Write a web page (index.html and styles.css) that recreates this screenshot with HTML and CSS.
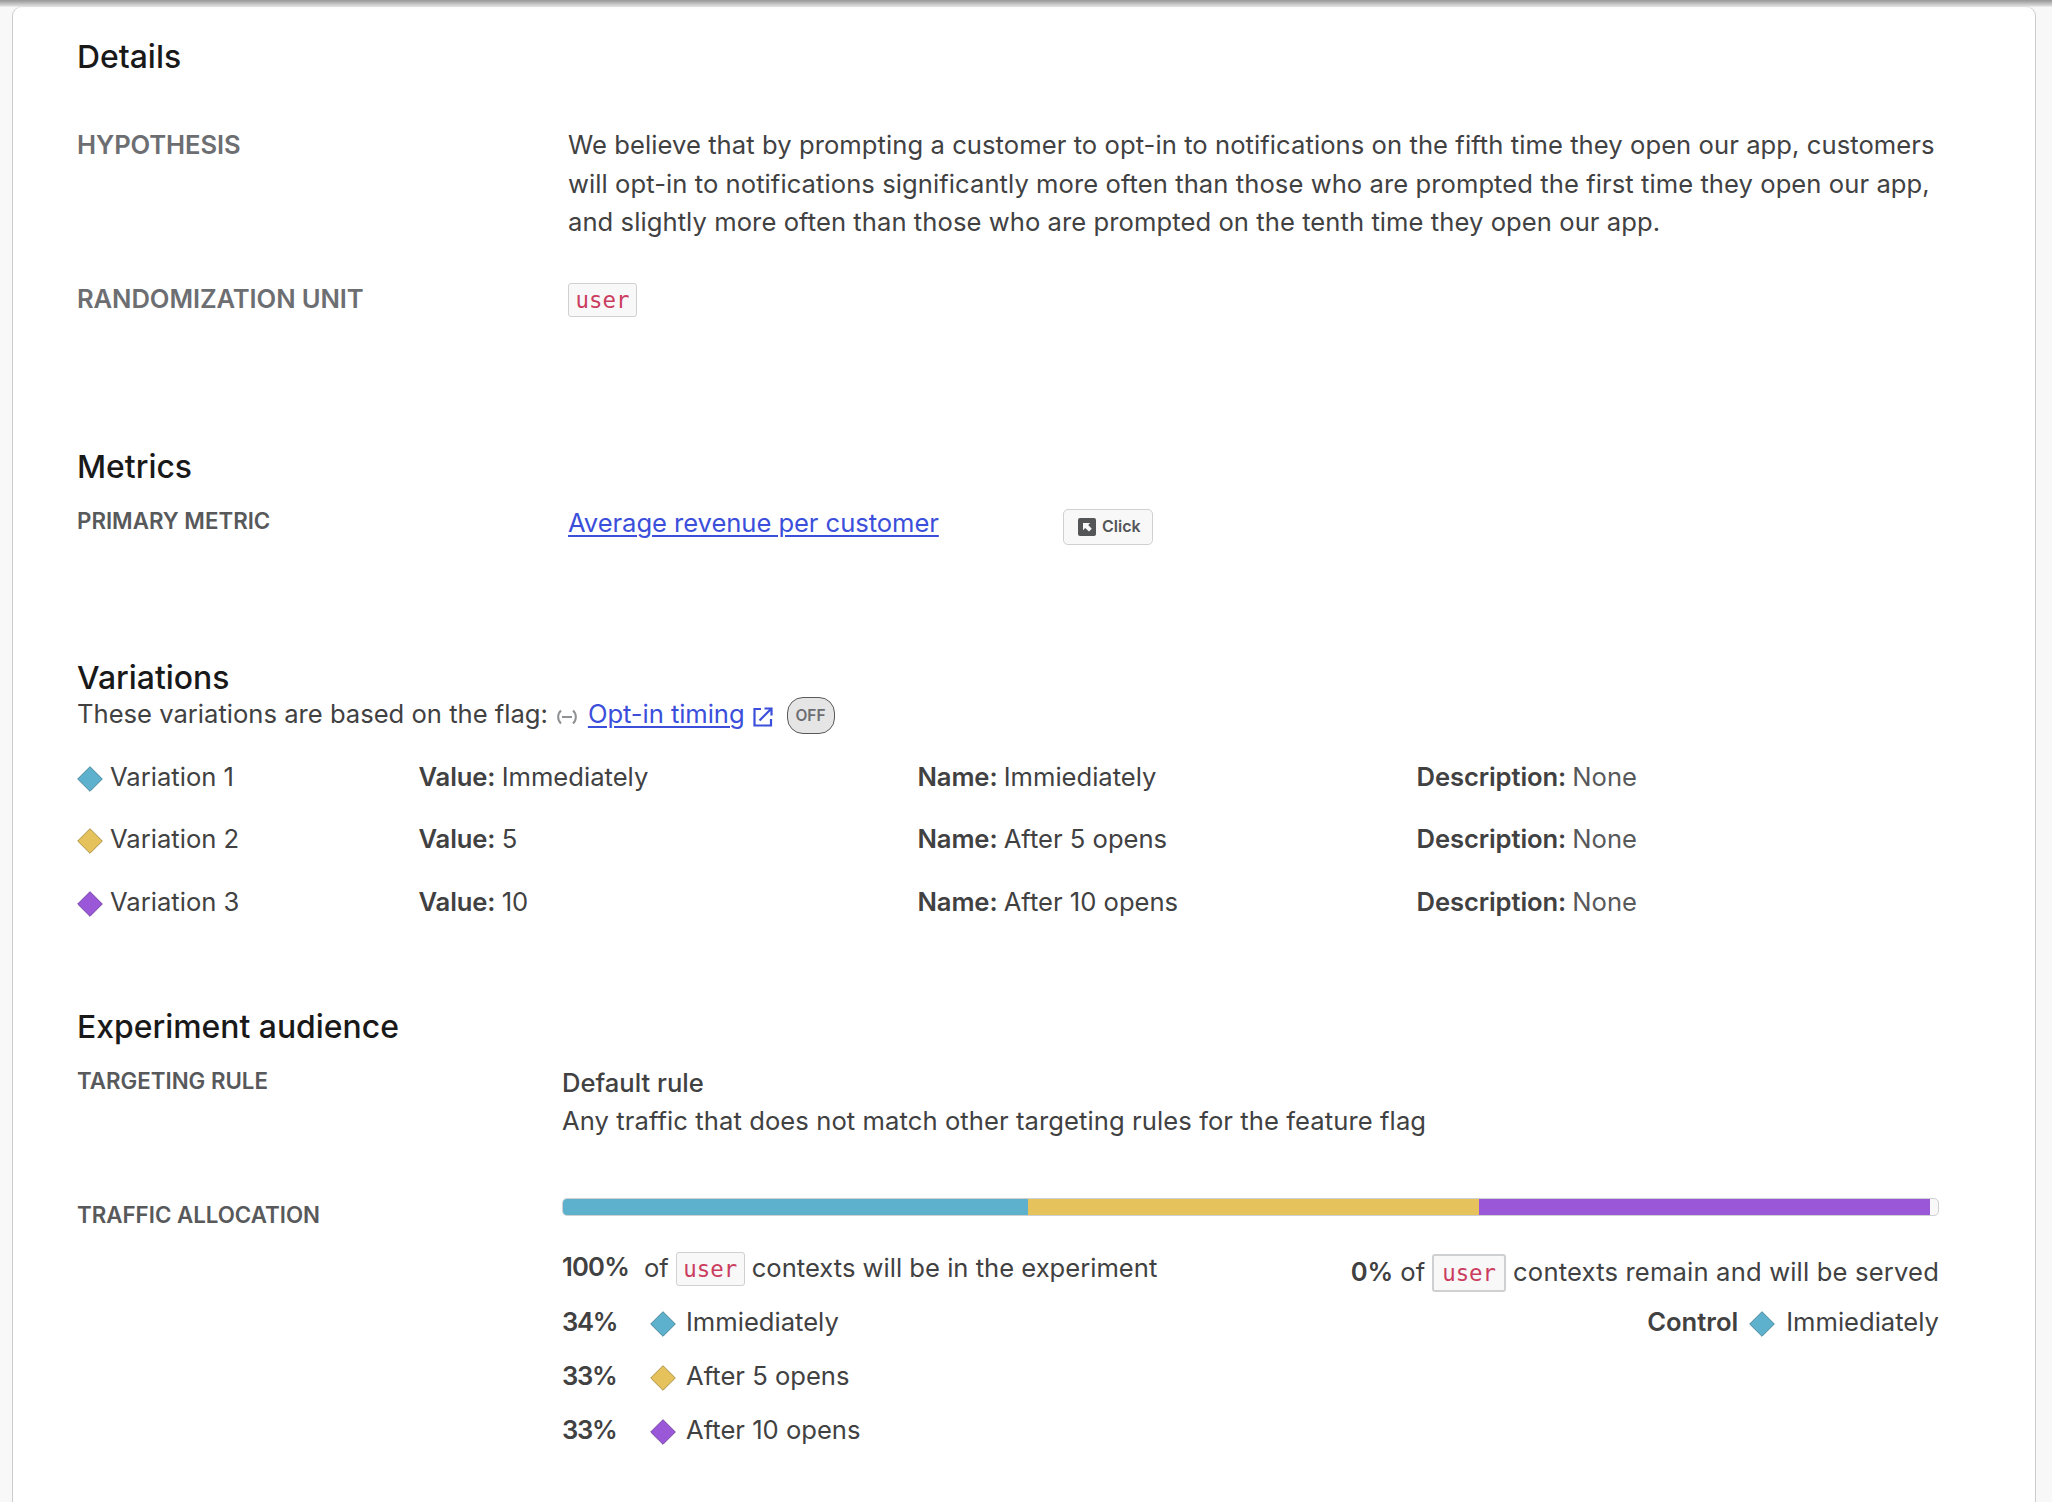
FILE: index.html
```html
<!DOCTYPE html>
<html lang="en">
<head>
<meta charset="utf-8">
<title>Experiment details</title>
<link rel="stylesheet" href="styles.css">
</head>
<body>
<svg class="defs" aria-hidden="true">
  <symbol id="diamond" viewBox="0 0 26 26"><path d="M13 .7 25.3 13 13 25.3 .7 13Z" stroke-width="1"/></symbol>
</svg>
<main class="card">
  <section class="details">
    <h2>Details</h2>
    <div class="row hypothesis">
      <h3 class="label">HYPOTHESIS</h3>
      <p>We believe that by prompting a customer to opt-in to notifications on the fifth time they open our app, customers<br>will opt-in to notifications significantly more often than those who are prompted the first time they open our app,<br>and slightly more often than those who are prompted on the tenth time they open our app.</p>
    </div>
    <div class="row unit">
      <h3 class="label">RANDOMIZATION UNIT</h3>
      <p><code>user</code></p>
    </div>
  </section>

  <section class="metrics">
    <h2>Metrics</h2>
    <div class="row metric">
      <h3 class="label small">PRIMARY METRIC</h3>
      <p class="metric-name"><a href="#">Average revenue per customer</a></p>
      <span class="tag"><svg class="tag-icon" viewBox="0 0 18 18"><rect width="18" height="18" rx="2" fill="#545557"/><path d="M5 5h7.200L10.200 7l3.600 3.800-2.800 2.800L7.200 10 5 12.200Z" fill="#f8f8f8"/></svg><span>Click</span></span>
    </div>
  </section>

  <section class="variations">
    <h2>Variations</h2>
    <p class="flag-line"><span>These variations are based on the flag:</span>
      <svg class="flag-icon" viewBox="0 0 22 16" fill="none" stroke="#8f9194" stroke-width="2"><path d="M5 1.500C1.200 5 1.200 11 5 14.500M17 1.500c3.800 3.500 3.800 9.500 0 13M6 8h10"/></svg>
      <a href="#">Opt-in timing</a>
      <svg class="ext-icon" viewBox="0 0 20 20" fill="none" stroke="#3b4fdb" stroke-width="2.200"><path d="M8 2H1.500v16.500H18V12M11.500 1.500h7v7M18.200 1.800 6.500 13.500"/></svg>
      <span class="off">OFF</span></p>
    <div class="vrow"><span class="vname"><svg class="dia blue"><use href="#diamond"/></svg><span>Variation 1</span></span><span><b>Value:</b> Immediately</span><span><b>Name:</b> Immiediately</span><span><b>Description:</b> <i>None</i></span></div>
    <div class="vrow"><span class="vname"><svg class="dia gold"><use href="#diamond"/></svg><span>Variation 2</span></span><span><b>Value:</b> 5</span><span><b>Name:</b> After 5 opens</span><span><b>Description:</b> <i>None</i></span></div>
    <div class="vrow"><span class="vname"><svg class="dia purple"><use href="#diamond"/></svg><span>Variation 3</span></span><span><b>Value:</b> 10</span><span><b>Name:</b> After 10 opens</span><span><b>Description:</b> <i>None</i></span></div>
  </section>

  <section class="audience">
    <h2>Experiment audience</h2>
    <div class="row rule">
      <h3 class="label small">TARGETING RULE</h3>
      <div><p class="rule-name">Default rule</p><p class="rule-text">Any traffic that does not match other targeting rules for the feature flag</p></div>
    </div>
    <div class="row traffic">
      <h3 class="label small">TRAFFIC ALLOCATION</h3>
      <div class="allocation">
        <div class="bar"><div class="seg blue" style="width:465px"></div><div class="seg gold" style="width:451px"></div><div class="seg purple" style="width:451px"></div></div>
        <div class="split">
          <div class="included">
            <p class="arow first"><b>100%</b><span class="ctx"><span>of</span><code>user</code><span>contexts will be in the experiment</span></span></p>
            <p class="arow"><b>34%</b><svg class="dia blue"><use href="#diamond"/></svg><span>Immiediately</span></p>
            <p class="arow"><b>33%</b><svg class="dia gold"><use href="#diamond"/></svg><span>After 5 opens</span></p>
            <p class="arow"><b>33%</b><svg class="dia purple"><use href="#diamond"/></svg><span>After 10 opens</span></p>
          </div>
          <div class="remaining">
            <p class="rrow"><b>0%</b><span>of</span><code class="thick">user</code><span class="served">contexts remain and will be served</span></p>
            <p class="rrow control"><b>Control</b><svg class="dia blue"><use href="#diamond"/></svg><span>Immiediately</span></p>
          </div>
        </div>
      </div>
    </div>
  </section>
</main>
<div class="top-shadow"></div>
</body>
</html>
```
FILE: styles.css
```css
* { box-sizing: border-box; }
body { margin: 0; height: 1502px; overflow: hidden; padding: 6px 16px 0 12px; background: #f8f8f8; color: #414142; font: 400 25.600px/38.6px Inter, "Liberation Sans", sans-serif; }
h2, h3, p { margin: 0; }
b { font-weight: 600; }
i { font-style: normal; color: #58595b; }
a { color: #3b4fdb; text-decoration-thickness: 2px; text-underline-offset: 3px; letter-spacing: -.06px; }
code { display: inline-block; padding: 0 6.500px; border: 1px solid #cfd0d1; border-radius: 3px; background: #f8f8f8; color: #cb3d5f; font: 22.400px/32px "DejaVu Sans Mono", monospace; }
.defs { position: absolute; width: 0; height: 0; }
.card { height: 1510px; padding: 28px 96px 0 64px; border: 1px solid #cbcccd; border-radius: 10px; background: #fff; }
h2 { height: 44px; color: #191919; font-size: 31.900px; line-height: 44px; font-weight: 500; }
.row { display: grid; grid-template-columns: 491px 1fr; }
.label { color: #6d6e72; font-size: 25.600px; line-height: 38.6px; font-weight: 600; letter-spacing: -.1px; }
.label.small { color: #58595b; font-size: 22.300px; line-height: 34px; font-weight: 600; letter-spacing: 0; }
.hypothesis { height: 154px; margin-top: 47px; white-space: nowrap; letter-spacing: .065px; }
.unit { height: 165px; }
.metric { grid-template-columns: 491px 495px auto; height: 152.500px; margin-top: 14px; }
.metric .label, .rule .label { padding-top: 1px; }
.metric-name { padding-top: 1px; }
.tag { display: flex; align-items: center; gap: 6px; width: 90px; height: 36px; margin-top: 6px; padding-left: 14px; border: 1px solid #cfd0d1; border-radius: 5px; background: #f8f8f8; color: #545557; font-size: 16px; font-weight: 600; }
.tag span { margin-top: -1px; }
.tag-icon { width: 18px; height: 18px; }
.variations h2 { margin-bottom: -5px; }
.flag-line { display: flex; align-items: center; height: 38.500px; }
.flag-line > span:first-child, .flag-line a { padding-top: 1.500px; }
.flag-icon { width: 22px; height: 16px; margin: 7px 9.500px 0 8.500px; }
.ext-icon { width: 20px; height: 20px; margin: 6px 14px 0 8px; }
.off { width: 48px; height: 37px; margin-top: 4px; border: 1px solid #58595b; border-radius: 16px; background: #e5e5e5; color: #6d6e72; font-size: 15.500px; line-height: 35px; font-weight: 600; text-align: center; }
.vrow { display: grid; grid-template-columns: 341.500px 499px 499px 1fr; height: 62.400px; padding-top: 24.800px; }
.vrow b { letter-spacing: -.1px; margin-right: -1px; }
.vname { display: flex; gap: 7px; }
.dia { width: 26px; height: 26px; flex: none; margin-top: 8.200px; }
.dia.blue { fill: #5db1cd; stroke: #47869c; }
.dia.gold { fill: #e5c25b; stroke: #ab9144; }
.dia.purple { fill: #9a57d7; stroke: #7541a4; }
.audience h2 { margin-top: 85px; }
.audience .row { grid-template-columns: 485px 1fr; }
.rule { height: 134.600px; margin-top: 14px; }
.rule-name { padding-top: .6px; margin-bottom: -.6px; font-weight: 500; }
.rule-text { letter-spacing: .08px; }
.bar { display: flex; width: 1377px; height: 18px; border: 1px solid #cfd0d1; border-radius: 5px; background: #f8f8f8; overflow: hidden; }
.seg { height: 16px; }
.seg.blue { background: #5db1cd; }
.seg.gold { background: #e5c25b; }
.seg.purple { background: #9a57d7; }
.split { display: flex; justify-content: space-between; width: 1377px; }
.arow { display: flex; height: 54.200px; }
.arow b { width: 88px; letter-spacing: -1.300px; }
.arow .dia, .rrow .dia { margin-top: 8px; }
.arow .dia { margin-right: 10px; }
.arow.first { padding-top: 33px; height: 87px; }
.arow.first b { width: 82px; margin-top: -1px; letter-spacing: -.8px; }
.ctx, .rrow { display: flex; align-items: baseline; gap: 7px; }
.rrow { height: 87px; padding-top: 37px; }
.rrow.control { height: 54px; padding: 0; gap: 11px; align-items: flex-start; justify-content: flex-end; }
.served { letter-spacing: .17px; }
.thick { padding: 1px 8px; border-width: 2px; }
.top-shadow { position: absolute; top: 0; left: 0; width: 100%; height: 10px; background: linear-gradient(#999 0, #a0a0a0 1px, #c4c4c4 4px, rgba(215,215,215,.9) 6px, rgba(248,248,248,.6) 7px, rgba(255,255,255,0) 10px); }
```
